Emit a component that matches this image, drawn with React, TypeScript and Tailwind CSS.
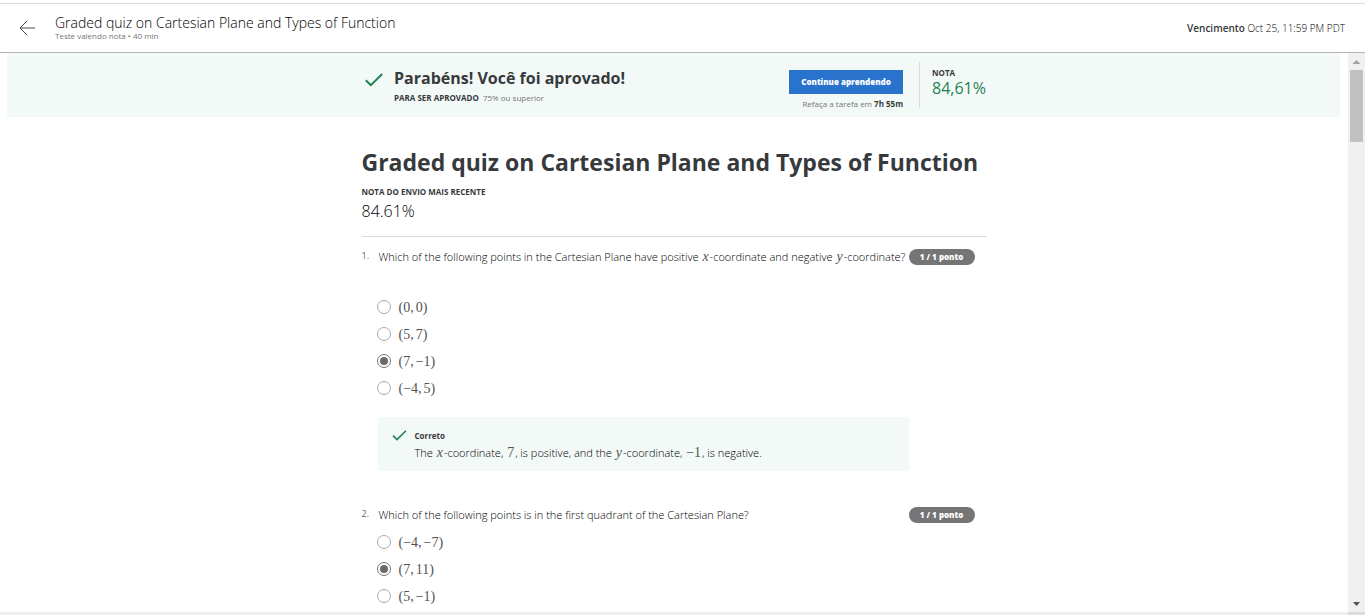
import { useState, type ReactNode } from "react";

function Check({ className }: { className: string }) {
  return (
    <svg viewBox="0 0 18 14" className={className} fill="none" stroke="#1f8354" aria-hidden="true">
      <path d="M0.8 7.2 5.8 12.2 17.2 1" strokeWidth="2" />
    </svg>
  );
}

function Tex({ children, italic = false }: { children: ReactNode; italic?: boolean }) {
  return (
    <span className={italic ? "mx-px font-['Liberation_Serif',serif] text-[14px] leading-none font-normal text-[#525252] italic" : "mx-px font-['Liberation_Serif',serif] text-[14px] leading-none font-normal text-[#525252]"}>
      {children}
    </span>
  );
}

function Option({ name, value, checked, onSelect }: { name: string; value: string; checked: boolean; onSelect: () => void }) {
  const [a, b] = value.split(",");
  return (
    <label className="flex h-[27px] items-center gap-2 text-[#525252]">
      <input
        type="radio"
        name={name}
        checked={checked}
        onChange={onSelect}
        className="flex size-[14px] shrink-0 appearance-none items-center justify-center rounded-full border border-[#a8a8a8] bg-white checked:border-[#757575] checked:before:size-[8px] checked:before:rounded-full checked:before:bg-[#6b6b6b] checked:before:content-['']"
      />
      <span className="flex gap-[2px] pt-[2px] font-['Liberation_Serif',serif] text-[14px] leading-none">
        <span>({a},</span>
        <span>{b})</span>
      </span>
    </label>
  );
}

function Question({ number, prompt, options, initial, spaced = false, children }: {
  number: number;
  prompt: ReactNode;
  options: string[];
  initial: number;
  spaced?: boolean;
  children?: ReactNode;
}) {
  const [selected, setSelected] = useState(initial);
  return (
    <section className="grid grid-cols-[15px_minmax(0,1fr)_78px]">
      <span className="text-[9px] leading-[14px] text-[#636363]">{number}.</span>
      <fieldset className="contents">
        <legend className="contents">
          <span className="pl-[2px] text-[11px] leading-4 font-light whitespace-nowrap text-black">{prompt}</span>
        </legend>
        <span className="flex h-4 w-[66px] items-center justify-center rounded-full bg-[#757575] text-[8px] font-extrabold text-white">
          1 / 1 ponto
        </span>
        <div className={spaced ? "col-start-2 pt-7" : "col-start-2 pt-[5px]"}>
          {options.map((o, i) => (
            <Option key={o} name={`question-${number}`} value={o} checked={i === selected} onSelect={() => setSelected(i)} />
          ))}
        </div>
      </fieldset>
      <div className="col-start-2">{children}</div>
    </section>
  );
}

export default function App() {
  return (
    <div className="flex h-screen flex-col overflow-hidden bg-white font-['Open_Sans',sans-serif] text-[#373a3c]">
      <header className="mt-[3px] flex h-[50px] shrink-0 items-center justify-between border-t border-b border-t-[#dcdcdc] border-b-[#b5b5b5] pr-5 pl-[19px]">
        <div className="flex items-center gap-5">
          <a href="#voltar" aria-label="Voltar">
            <svg viewBox="0 0 16 16" className="size-4" fill="none" stroke="#4a4a4a" strokeWidth="1">
              <path d="M8 1 1 8l7 7M1 8h15" />
            </svg>
          </a>
          <div className="pb-[2px]">
            <div className="text-[14px] leading-[17px] font-light text-black">Graded quiz on Cartesian Plane and Types of Function</div>
            <div className="text-[8px] leading-[10px] text-[#757575]">Teste valendo nota • 40 min</div>
          </div>
        </div>
        <p className="text-[10px] leading-3 font-light text-black">
          <strong className="font-semibold text-[#373a3c]">Vencimento</strong> Oct 25, 11:59 PM PDT
        </p>
      </header>

      <div className="flex min-h-0 grow">
        <main className="min-w-0 grow overflow-hidden">
          <div className="mr-2 ml-[7px] flex h-16 justify-center bg-[#f3f9f7]">
            <div className="flex w-full max-w-[625px] items-start justify-between">
              <div className="flex gap-[11px] pt-[14px] pl-1">
                <Check className="mt-[6px] h-[14px] w-[18px]" />
                <div>
                  <h2 className="text-[16px] leading-[22px] font-bold">Parabéns! Você foi aprovado!</h2>
                  <p className="mt-1 text-[8px] leading-[10px] text-[#757575]">
                    <strong className="mr-[2px] font-bold text-[#373a3c]">PARA SER APROVADO</strong> 75% ou superior
                  </p>
                </div>
              </div>
              <div className="flex pt-[9px]">
                <div className="flex flex-col items-end pt-2 pr-4">
                  <button type="button" className="h-6 w-[114px] bg-[#2a73cc] text-[8px] font-extrabold text-white">
                    Continue aprendendo
                  </button>
                  <p className="mt-[5px] text-[8px] leading-[10px] text-[#757575]">
                    Refaça a tarefa em <strong className="text-[#373a3c]">7h 55m</strong>
                  </p>
                </div>
                <div className="h-[46px] border-l border-[#dcdcdc] pt-[6px] pl-3">
                  <p className="text-[8px] leading-[10px] font-bold">NOTA</p>
                  <p className="text-[16px] leading-5 text-[#1f8354]">84,61%</p>
                </div>
              </div>
            </div>
          </div>

          <div className="mx-auto w-full max-w-[625px] pt-[29px]">
            <h1 className="text-[23px] leading-8 font-bold whitespace-nowrap">Graded quiz on Cartesian Plane and Types of Function</h1>
            <p className="mt-[9px] text-[8px] leading-[10px] font-bold">NOTA DO ENVIO MAIS RECENTE</p>
            <p className="mt-1 mb-[15px] text-[16px] leading-5 font-light text-black">84.61%</p>
            <div className="flex flex-col gap-9 border-t border-[#dcdcdc] pt-3">
              <Question
                number={1}
                prompt={
                  <>
                    Which of the following points in the Cartesian Plane have positive <Tex italic>x</Tex>-coordinate and negative <Tex italic>y</Tex>-coordinate?
                  </>
                }
                options={["0,0", "5,7", "7,−1", "−4,5"]}
                initial={2}
                spaced
              >
                <div className="mt-4 ml-px flex h-[54px] gap-2 bg-[#f3f9f7] pt-3 pl-[14px]">
                  <Check className="mt-px h-[11px] w-[15px]" />
                  <div>
                    <p className="text-[8px] leading-[14px] font-bold">Correto</p>
                    <p className="text-[11px] leading-5 font-light text-black">
                      The <Tex italic>x</Tex>-coordinate, <Tex>7</Tex>, is positive, and the <Tex italic>y</Tex>-coordinate, <Tex>−1</Tex>, is negative.
                    </p>
                  </div>
                </div>
              </Question>
              <Question
                number={2}
                prompt="Which of the following points is in the first quadrant of the Cartesian Plane?"
                options={["−4,−7", "7,11", "5,−1"]}
                initial={1}
              />
            </div>
          </div>
        </main>
        <div className="flex w-[17px] shrink-0 flex-col items-center bg-[#f0f0f0]" aria-hidden="true">
          <svg viewBox="0 0 17 17" className="size-[17px]" fill="#a0a0a0">
            <path d="M8.5 7 12.5 11h-8z" />
          </svg>
          <div className="h-[72px] w-[13px] bg-[#c1c1c1]" />
          <svg viewBox="0 0 17 17" className="mt-auto size-[17px]" fill="#505050">
            <path d="M5 7h7l-3.5 4z" />
          </svg>
        </div>
      </div>
      <div className="flex h-[3px] shrink-0 justify-end bg-[#f0f0f0]">
        <div className="w-[17px] bg-[#dcdcdc]" />
      </div>
    </div>
  );
}
